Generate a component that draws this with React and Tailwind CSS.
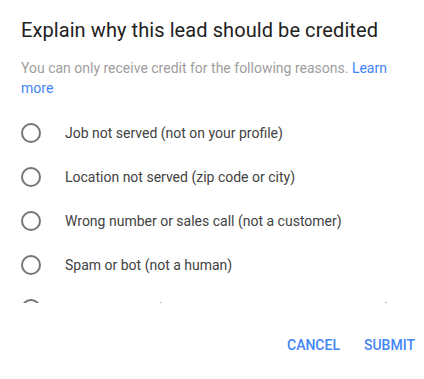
const reasons = [
  'Job not served (not on your profile)',
  'Location not served (zip code or city)',
  'Wrong number or sales call (not a customer)',
  'Spam or bot (not a human)',
  'Duplicate lead (this customer already contacted me)',
];

export default function App() {
  return (
    <div className="w-[424px] h-[379px] bg-white font-['Roboto',sans-serif] flex flex-col">
      <div className="px-[21px] pt-[16px]">
        <h2 className="text-[20px] leading-[28px] tracking-[0.08px] text-[#212121] font-normal">
          Explain why this lead should be credited
        </h2>
        <p className="mt-[14px] text-[14px] leading-[20px] text-[#9e9e9e]">
          You can only receive credit for the following reasons.{' '}
          <a className="text-[#4285f4]">Learn more</a>
        </p>
      </div>

      <div className="mt-[13px] h-[192px] overflow-hidden">
        {reasons.map((r) => (
          <label key={r} className="flex items-center h-[44px] pl-[21px]">
            <span className="w-[20px] h-[20px] rounded-full border-2 border-[#757575] shrink-0" />
            <span className="ml-[24px] text-[14px] text-[#424242] whitespace-nowrap">{r}</span>
          </label>
        ))}
      </div>

      <div className="flex justify-end gap-[8px] pr-[1px] pt-[24px]">
        <button className="h-[36px] px-[8px] text-[14px] font-medium text-[#4285f4] uppercase">
          Cancel
        </button>
        <button className="h-[36px] px-[8px] text-[14px] font-medium text-[#4285f4] uppercase">
          Submit
        </button>
      </div>
    </div>
  );
}
